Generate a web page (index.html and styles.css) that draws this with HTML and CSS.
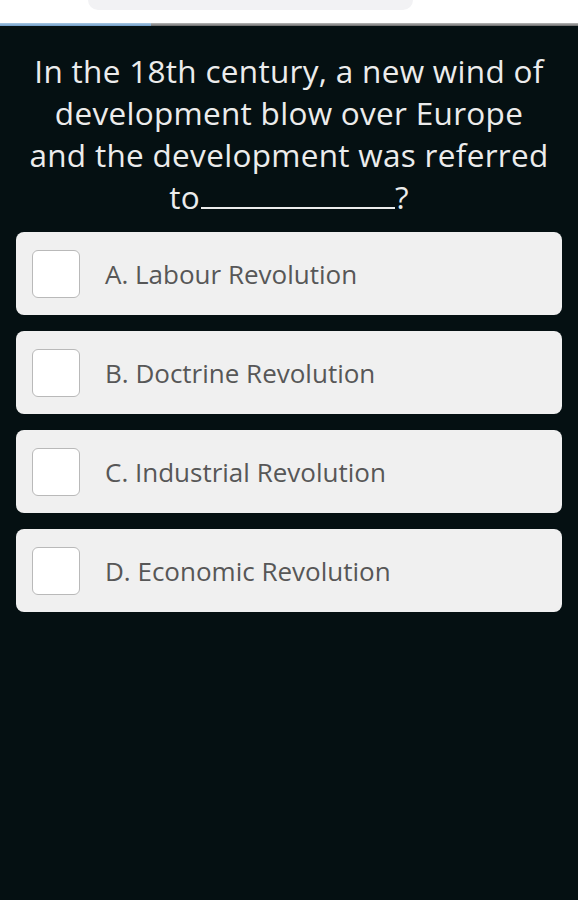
FILE: index.html
```html
<!DOCTYPE html>
<html lang="en">
<head>
  <meta charset="UTF-8">
  <title>Quiz</title>
  <link rel="stylesheet" href="styles.css">
</head>
<body>
  <div class="topo">
    <div class="busca"></div>
  </div>
  <div class="progresso">
    <div class="progresso-barra"></div>
  </div>
  <div class="quiz">
    <p class="pergunta">
      In the 18th century, a new wind of<br>
      development blow over Europe<br>
      and the development was referred<br>
      to<span class="lacuna"></span>?
    </p>
    <div class="opcoes">
      <div class="opcao"><span class="caixa"></span><span class="texto">A. Labour Revolution</span></div>
      <div class="opcao"><span class="caixa"></span><span class="texto">B. Doctrine Revolution</span></div>
      <div class="opcao"><span class="caixa"></span><span class="texto">C. Industrial Revolution</span></div>
      <div class="opcao"><span class="caixa"></span><span class="texto">D. Economic Revolution</span></div>
    </div>
  </div>
</body>
</html>
```

FILE: styles.css
```css
html, body {
  margin: 0;
  height: 100%;
}
body {
  background-color: #051012;
  font-family: "Open Sans", "Noto Sans", sans-serif;
}
.topo {
  background-color: #fff;
  height: 23px;
}
.busca {
  margin-left: 88px;
  width: 325px;
  height: 10px;
  background-color: #f2f2f4;
  border-radius: 0 0 14px 14px;
}
.progresso {
  height: 3px;
  background: linear-gradient(#b8b8b8, #6a6a6a);
}
.progresso-barra {
  width: 151px;
  height: 3px;
  background: linear-gradient(#a9c8e4, #6f9cc6);
}
.quiz {
  padding: 0 16px;
}
.pergunta {
  margin: 24px 0 14px;
  color: #ececec;
  font-size: 31.5px;
  letter-spacing: 0.3px;
  line-height: 42px;
  text-align: center;
}
.lacuna {
  display: inline-block;
  width: 194px;
  border-bottom: 2px solid #ececec;
  margin-left: 1px;
}
.opcoes {
  display: flex;
  flex-direction: column;
  gap: 16px;
}
.opcao {
  display: flex;
  align-items: center;
  height: 83px;
  background-color: #f0f0f0;
  border-radius: 8px;
  padding-left: 16px;
}
.caixa {
  width: 46px;
  height: 46px;
  background-color: #fff;
  border: 1.5px solid #b9b9b9;
  border-radius: 6px;
  margin-right: 25px;
}
.texto {
  color: #575757;
  font-size: 26px;
}
```
